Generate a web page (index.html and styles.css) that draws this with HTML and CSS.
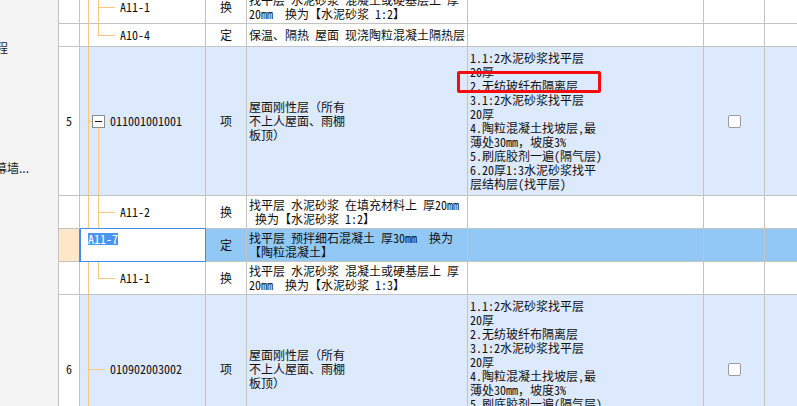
FILE: index.html
```html
<!DOCTYPE html>
<html lang="zh-CN">
<head>
<meta charset="utf-8">
<title>清单</title>
<link rel="stylesheet" href="styles.css">
</head>
<body>
<div class="app">
  <aside class="side">
    <div class="side-item first">程</div>
    <div class="side-item second">幕墙...</div>
  </aside>
  <div class="grid">
    <div class="row h33">
      <div class="c num"></div>
      <div class="c code tree-mid"><span class="code-child">A11-1</span></div>
      <div class="c type">换</div>
      <div class="c name">找平层 水泥砂浆 混凝土或硬基层上 厚<br>20mm&nbsp; 换为【水泥砂浆 1:2】</div>
      <div class="c note"></div>
      <div class="c chk"></div>
      <div class="c extra"></div>
    </div>
    <div class="row h23">
      <div class="c num"></div>
      <div class="c code tree-last"><span class="code-child">A10-4</span></div>
      <div class="c type">定</div>
      <div class="c name">保温、隔热 屋面 现浇陶粒混凝土隔热层</div>
      <div class="c note"></div>
      <div class="c chk"></div>
      <div class="c extra"></div>
    </div>
    <div class="row h149 item-row">
      <div class="c num">5</div>
      <div class="c code tree-open"><span class="toggle"><span class="minus"></span></span><span class="code-item">011001001001</span></div>
      <div class="c type">项</div>
      <div class="c name">屋面刚性层（所有<br>不上人屋面、雨棚<br>板顶）</div>
      <div class="c note">1.1:2水泥砂浆找平层<br>20厚<br>2.无纺玻纤布隔离层<br>3.1:2水泥砂浆找平层<br>20厚<br>4.陶粒混凝土找坡层,最<br>薄处30mm，坡度3%<br>5.刷底胶剂一遍(隔气层)<br>6.20厚1:3水泥砂浆找平<br>层结构层(找平层)</div>
      <div class="c chk"><span class="box"></span></div>
      <div class="c extra"></div>
    </div>
    <div class="row h33">
      <div class="c num"></div>
      <div class="c code tree-mid"><span class="code-child">A11-2</span></div>
      <div class="c type">换</div>
      <div class="c name">找平层 水泥砂浆 在填充材料上 厚20mm<br>&nbsp;换为【水泥砂浆 1:2】</div>
      <div class="c note"></div>
      <div class="c chk"></div>
      <div class="c extra"></div>
    </div>
    <div class="row h33 selected">
      <div class="c num"></div>
      <div class="c code editing"><span class="sel-text">A11-7</span></div>
      <div class="c type">定</div>
      <div class="c name">找平层 预拌细石混凝土 厚30mm&nbsp; 换为<br>【陶粒混凝土】</div>
      <div class="c note"></div>
      <div class="c chk"></div>
      <div class="c extra"></div>
    </div>
    <div class="row h33">
      <div class="c num"></div>
      <div class="c code tree-last"><span class="code-child">A11-1</span></div>
      <div class="c type">换</div>
      <div class="c name">找平层 水泥砂浆 混凝土或硬基层上 厚<br>20mm&nbsp; 换为【水泥砂浆 1:3】</div>
      <div class="c note"></div>
      <div class="c chk"></div>
      <div class="c extra"></div>
    </div>
    <div class="row h149 item-row">
      <div class="c num">6</div>
      <div class="c code tree-leaf"><span class="code-item">010902003002</span></div>
      <div class="c type">项</div>
      <div class="c name">屋面刚性层（所有<br>不上人屋面、雨棚<br>板顶）</div>
      <div class="c note">1.1:2水泥砂浆找平层<br>20厚<br>2.无纺玻纤布隔离层<br>3.1:2水泥砂浆找平层<br>20厚<br>4.陶粒混凝土找坡层,最<br>薄处30mm，坡度3%<br>5.刷底胶剂一遍(隔气层)<br>6.20厚1:3水泥砂浆找平<br>层结构层(找平层)</div>
      <div class="c chk"><span class="box"></span></div>
      <div class="c extra"></div>
    </div>
  </div>
  <div class="annot"></div>
</div>
</body>
</html>
```
FILE: styles.css
```css
html, body {
  margin: 0;
  padding: 0;
  background: #ffffff;
}

.app {
  position: relative;
  display: flex;
  width: 797px;
  height: 406px;
  overflow: hidden;
}

.side {
  flex: 0 0 58px;
  background: #f3f3f3;
  font-family: "Noto Sans CJK SC", "Noto Sans", sans-serif;
  font-size: 12px;
  color: #1c1c1c;
  padding-top: 40px;
  box-sizing: border-box;
}

.side-item {
  height: 16px;
  line-height: 16px;
  white-space: nowrap;
}

.side-item.first {
  margin-left: -4px;
}

.side-item.second {
  margin-left: -5px;
  margin-top: 104px;
}

.grid {
  flex: 0 0 auto;
  margin-top: -9px;
  border-left: 1px solid #c3c3c3;
  font-family: "Noto Sans Mono CJK SC", "Noto Sans CJK SC", sans-serif;
  font-size: 12px;
  line-height: 14px;
  color: #111111;
  align-self: flex-start;
}

.row {
  display: grid;
  grid-template-columns: 21px 126px 41px 221px 236px 61px 40px;
}

.h23 { height: 23px; }
.h33 { height: 33px; }
.h149 { height: 149px; }

.c {
  box-sizing: border-box;
  border-right: 1px solid #c3c3c3;
  border-bottom: 1px solid #c3c3c3;
  display: flex;
  align-items: center;
  white-space: nowrap;
  min-width: 0;
}

.num, .type {
  justify-content: center;
}

.name, .note {
  padding: 0 2px;
  display: block;
  align-self: stretch;
}

.name-inner, .note-inner { display: block; }

.c.name, .c.note {
  display: flex;
  align-items: center;
}

.item-row .c { background-color: #dde9fc; }
.item-row .c.num { background-color: #ffffff; }

.selected .c { background-color: #92c8f5; }
.selected .c.num { background-color: #fee7c9; }

.code {
  background-repeat: no-repeat;
}

.tree-mid {
  background-image:
    linear-gradient(#fdc77f, #fdc77f),
    linear-gradient(#fdc77f, #fdc77f),
    linear-gradient(#fdc77f, #fdc77f);
  background-size: 1px 100%, 1px 100%, 17px 1px;
  background-position: 8px 0, 18px 0, 18px 50%;
  background-repeat: no-repeat;
}

.tree-last {
  background-image:
    linear-gradient(#fdc77f, #fdc77f),
    linear-gradient(#fdc77f, #fdc77f),
    linear-gradient(#fdc77f, #fdc77f);
  background-size: 1px 100%, 1px 50%, 17px 1px;
  background-position: 8px 0, 18px 0, 18px 50%;
  background-repeat: no-repeat;
}

.tree-open {
  background-image:
    linear-gradient(#fdc77f, #fdc77f),
    linear-gradient(#fdc77f, #fdc77f),
    linear-gradient(#fdc77f, #fdc77f);
  background-size: 1px 100%, 1px 50%, 5px 1px;
  background-position: 8px 0, 18px 100%, 8px 50%;
  background-repeat: no-repeat;
}

.tree-leaf {
  background-image:
    linear-gradient(#fdc77f, #fdc77f),
    linear-gradient(#fdc77f, #fdc77f);
  background-size: 1px 100%, 17px 1px;
  background-position: 8px 0, 8px 50%;
  background-repeat: no-repeat;
  padding-left: 30px;
}

.tree-mid, .tree-last {
  padding-left: 40px;
}

.tree-open {
  padding-left: 12px;
}

.toggle {
  box-sizing: border-box;
  width: 13px;
  height: 13px;
  border: 1px solid #8c8c8c;
  background: #ffffff;
  display: flex;
  align-items: center;
  justify-content: center;
  margin-right: 5px;
  flex: 0 0 auto;
}

.minus {
  width: 7px;
  height: 1px;
  background: #1a1a1a;
}

.editing {
  align-items: flex-start;
  padding: 4px 0 0 8px;
  border-right-color: #3f8fe9;
  border-bottom-color: #3f8fe9;
  box-shadow: -1px 0 0 0 #3f8fe9, 0 -1px 0 0 #3f8fe9, inset 1px 0 0 0 #3f8fe9;
}

.selected .c.editing { background-color: #ffffff; }

.sel-text {
  background: #4b95f1;
  color: #ffffff;
  line-height: 12px;
  height: 12px;
}

.chk {
  justify-content: center;
}

.box {
  box-sizing: border-box;
  width: 13px;
  height: 13px;
  border: 1px solid #9b9b9b;
  border-radius: 2px;
  background: #ffffff;
}

.extra {
  border-right: none;
}

.annot {
  position: absolute;
  left: 457px;
  top: 71px;
  width: 144px;
  height: 22px;
  box-sizing: border-box;
  border: 3px solid #f50d0d;
  border-radius: 2px;
}
```
